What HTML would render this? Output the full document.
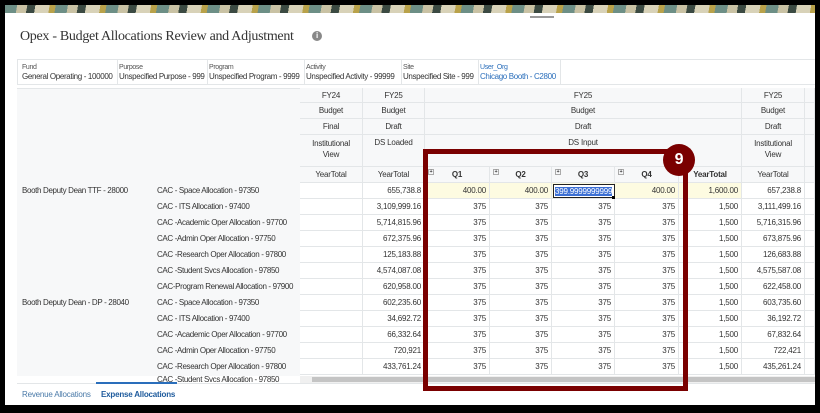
<!DOCTYPE html>
<html><head><meta charset="utf-8"><style>
*{margin:0;padding:0;box-sizing:border-box}
body{width:820px;height:413px;background:#000;position:relative;overflow:hidden;font-family:"Liberation Sans",sans-serif;font-size:8px;color:#333;letter-spacing:-0.2px}
.pg{position:absolute;left:5px;top:5px;width:810px;height:400px;background:#fff}
.band{position:absolute;left:5px;top:5px;width:810px;height:8px;background:repeating-linear-gradient(100deg,#6d8f86 0 12px,#c9c2a4 12px 22px,#3b4a42 22px 30px,#d8d2b8 30px 44px,#b9a24a 44px 50px)}
.a{position:absolute;white-space:nowrap}
.c{position:absolute;border-right:1px solid #e3e6e8;border-bottom:1px solid #e3e6e8;font-size:8px;display:flex;align-items:center;padding:0 3px;white-space:nowrap;overflow:hidden}
.r{justify-content:flex-end}.m{justify-content:center}
.f{letter-spacing:-0.35px}
</style></head><body>
<div class="pg"></div>
<div class="band"></div>
<div class="a" style="left:530px;top:16px;width:24px;height:2px;background:#999"></div>
<div class="a" style="left:20px;top:29px;font-family:'Liberation Serif',serif;font-size:14px;color:#333;letter-spacing:-0.3px">Opex - Budget Allocations Review and Adjustment</div>
<div class="a" style="left:312px;top:31px;width:10px;height:10px;border-radius:50%;background:#888;color:#fff;font-size:8px;text-align:center;line-height:10px;font-weight:bold">i</div>
<div class="a" style="left:17px;top:59px;width:798px;height:26px;border:1px solid #e3e6e8;border-right:none"></div>
<div class="a f" style="left:22px;top:63px;font-size:7px;line-height:9px;color:#555">Fund<br><span style="font-size:8px;color:#333">General Operating - 100000</span></div>
<div class="a f" style="left:119px;top:63px;font-size:7px;line-height:9px;color:#555">Purpose<br><span style="font-size:8px;color:#333">Unspecified Purpose - 999</span></div>
<div class="a f" style="left:209px;top:63px;font-size:7px;line-height:9px;color:#555">Program<br><span style="font-size:8px;color:#333">Unspecified Program - 9999</span></div>
<div class="a f" style="left:306px;top:63px;font-size:7px;line-height:9px;color:#555">Activity<br><span style="font-size:8px;color:#333">Unspecified Activity - 99999</span></div>
<div class="a f" style="left:403px;top:63px;font-size:7px;line-height:9px;color:#555">Site<br><span style="font-size:8px;color:#333">Unspecified Site - 999</span></div>
<div class="a f" style="left:480px;top:63px;font-size:7px;line-height:9px;color:#2a6ebb">User_Org<br><span style="font-size:8px">Chicago Booth - C2800</span></div>
<div class="a" style="left:117px;top:60px;width:1px;height:24px;background:#e3e6e8"></div>
<div class="a" style="left:207px;top:60px;width:1px;height:24px;background:#e3e6e8"></div>
<div class="a" style="left:304px;top:60px;width:1px;height:24px;background:#e3e6e8"></div>
<div class="a" style="left:401px;top:60px;width:1px;height:24px;background:#e3e6e8"></div>
<div class="a" style="left:478px;top:60px;width:1px;height:24px;background:#e3e6e8"></div>
<div class="a" style="left:560px;top:60px;width:1px;height:24px;background:#e3e6e8"></div>
<div class="a" style="left:17px;top:88px;width:283px;height:288px;background:#f7f8f9;border-top:1px solid #e3e6e8"></div>
<div id="t"></div>
<div class="a" style="left:300px;top:376px;width:515px;height:7px;background:#f0f0f0"></div>
<div class="a" style="left:312px;top:377px;width:503px;height:5px;background:#c4c4c4"></div>
<div class="a" style="left:17px;top:383px;width:798px;height:1px;background:#e3e6e8"></div>
<div class="a" style="left:22px;top:390px;color:#4a7aa8">Revenue Allocations</div>
<div class="a" style="left:101px;top:390px;color:#1d5a9c;font-weight:bold">Expense Allocations</div>
<div class="a" style="left:96px;top:382px;width:81px;height:2px;background:#2a6ebb"></div>
<div class="a" style="left:423px;top:149px;width:265px;height:242px;border:5px solid #7a0000"></div>
<div class="a" style="left:663px;top:144px;width:32px;height:32px;border-radius:50%;background:#7a0000;color:#fff;font-weight:bold;font-size:16px;text-align:center;line-height:32px">9</div>
<script>
var X=[300,363,425,490,552,615,679,742,805,815];
var h='';
function c(x1,x2,y1,y2,t,cl,st){h+='<div class="c '+(cl||'')+'" style="left:'+x1+'px;top:'+y1+'px;width:'+(x2-x1)+'px;height:'+(y2-y1)+'px;'+(st||'')+'">'+t+'</div>';}
var bg='background:#f7f8f9;';
c(300,363,88,103,'FY24','m',bg);c(363,425,88,103,'FY25','m',bg);c(425,742,88,103,'FY25','m',bg);c(742,805,88,103,'FY25','m',bg);c(805,815,88,103,'','',bg);
c(300,363,103,119,'Budget','m',bg);c(363,425,103,119,'Budget','m',bg);c(425,742,103,119,'Budget','m',bg);c(742,805,103,119,'Budget','m',bg);c(805,815,103,119,'','',bg);
c(300,363,119,135,'Final','m',bg);c(363,425,119,135,'Draft','m',bg);c(425,742,119,135,'Draft','m',bg);c(742,805,119,135,'Draft','m',bg);c(805,815,119,135,'','',bg);
c(300,363,135,167,'Institutional<br>View','m',bg+'text-align:center;align-items:flex-start;padding-top:3px;line-height:11px');c(363,425,135,167,'DS Loaded','m',bg+'align-items:flex-start;padding-top:3px');c(425,742,135,167,'DS Input','m',bg+'align-items:flex-start;padding-top:3px');c(742,805,135,167,'Institutional<br>View','m',bg+'text-align:center;align-items:flex-start;padding-top:3px;line-height:11px');c(805,815,135,167,'','',bg);
var hd=['YearTotal','YearTotal','Q1','Q2','Q3','Q4','YearTotal','YearTotal',''];
for(var i=0;i<9;i++){var b=(i>=2&&i<=5)?'<span style="position:absolute;left:3px;top:2px;width:6px;height:6px;border:1px solid #aaa;font-size:5px;line-height:4px;text-align:center">+</span>':'';c(X[i],X[i+1],167,183,b+hd[i],'m',bg+((i>=2&&i<=6)?'font-weight:bold;':''));}
var L=[['Booth Deputy Dean TTF - 28000','CAC - Space Allocation - 97350','655,738.8'],['','CAC - ITS Allocation - 97400','3,109,999.16','3,111,499.16'],['','CAC -Academic Oper Allocation - 97700','5,714,815.96','5,716,315.96'],['','CAC -Admin Oper Allocation - 97750','672,375.96','673,875.96'],['','CAC -Research Oper Allocation - 97800','125,183.88','126,683.88'],['','CAC -Student Svcs Allocation - 97850','4,574,087.08','4,575,587.08'],['','CAC-Program Renewal Allocation - 97900','620,958.00','622,458.00'],['Booth Deputy Dean - DP - 28040','CAC - Space Allocation - 97350','602,235.60','603,735.60'],['','CAC - ITS Allocation - 97400','34,692.72','36,192.72'],['','CAC -Academic Oper Allocation - 97700','66,332.64','67,832.64'],['','CAC -Admin Oper Allocation - 97750','720,921','722,421'],['','CAC -Research Oper Allocation - 97800','433,761.24','435,261.24']];
for(var r=0;r<12;r++){var y=183+r*16;var d=L[r];
h+='<div class="a f" style="left:22px;top:'+(y+3)+'px">'+d[0]+'</div><div class="a f" style="left:157px;top:'+(y+3)+'px">'+d[1]+'</div>';
var v=r==0?['',d[2],'400.00','400.00','','400.00','1,600.00','657,238.8','']:['',d[2],'375','375','375','375','1,500',d[3],''];
for(var i=0;i<9;i++){var s=(r==0&&i>=2&&i<=6)?'background:#fdfbe1;':'';c(X[i],X[i+1],y,y+16,v[i],'r',s);}
}
h+='<div class="a f" style="left:157px;top:375px">CAC -Student Svcs Allocation - 97850</div>';
h+='<div class="a" style="left:553px;top:184px;width:62px;height:14px;border:1.5px solid #222;background:#fff;padding:2px 1px;overflow:hidden"><span style="background:#3b6fd4;color:#fff;font-size:8px">399.9999999999</span></div>';
h+='<div class="a" style="left:612px;top:196px;width:3px;height:3px;background:#000"></div>';
document.getElementById('t').outerHTML=h;
</script>
</body></html>
